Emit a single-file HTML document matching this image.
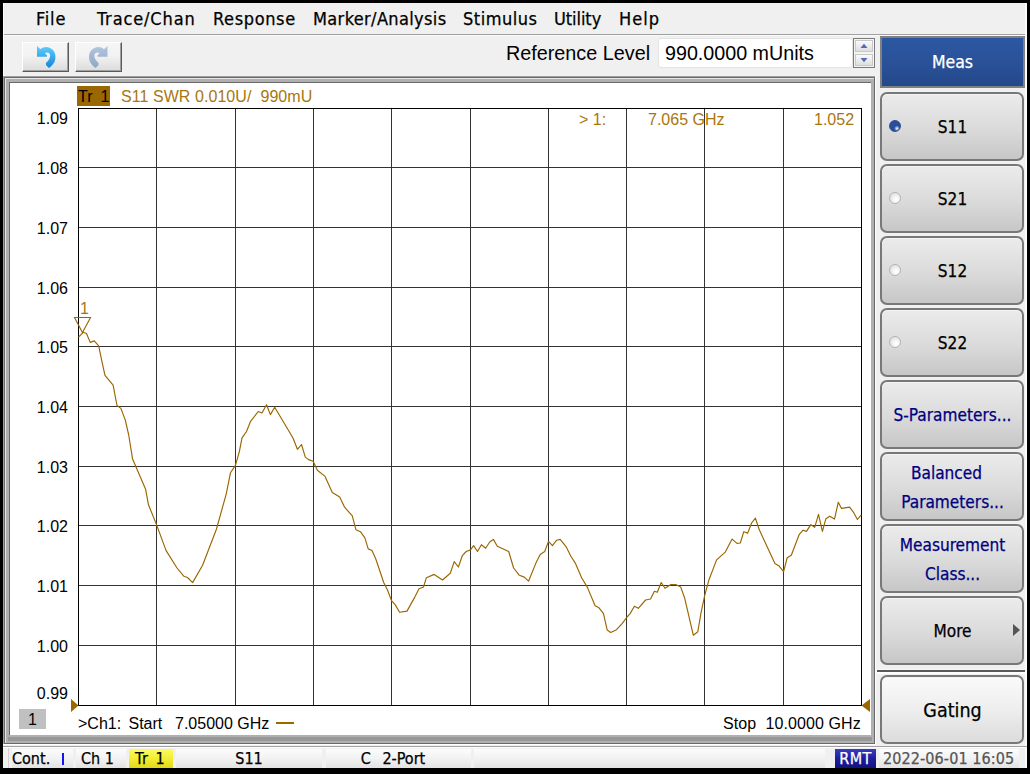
<!DOCTYPE html>
<html><head><meta charset="utf-8">
<title>Network Analyzer</title>
<style>
html,body{margin:0;padding:0;}
body{width:1030px;height:774px;background:#000;position:relative;overflow:hidden;font-family:"Liberation Sans",sans-serif;color:#000;}
div,span{box-sizing:border-box;}
.abs{position:absolute;}
.th{font-family:"DejaVu Sans Condensed","DejaVu Sans","Liberation Sans",sans-serif;font-stretch:condensed;-webkit-text-stroke:0.25px;}
#win{position:absolute;left:3px;top:3px;width:1024px;height:765px;background:#f0f0f0;}
.menu{position:absolute;top:8px;font-size:18px;line-height:21px;white-space:nowrap;letter-spacing:0.2px;}
.tbtn{position:absolute;top:42px;width:47px;height:30px;border:1px solid;border-color:#fff #5a5a5a #5a5a5a #fff;background:linear-gradient(#f6f6f6,#f2f2f2 45%,#dcdcdc);box-shadow:inset -1px -1px 0 #a0a0a0;}
.yl{position:absolute;left:20px;width:48px;text-align:right;font-size:16px;line-height:20px;}
.pt{position:absolute;font-size:16px;line-height:20px;white-space:nowrap;}
.gold{color:#a9760d;}
.sb{position:absolute;left:880px;width:144px;border:2px solid #787878;border-radius:7px;background:linear-gradient(#ebebeb,#dcdcdc 50%,#c7c7c7);box-shadow:inset 0 1px 0 #f4f4f4;}
.sb.gating{background:linear-gradient(#fafafa,#eeeeee 50%,#dcdcdc);}
.lbl1{-webkit-text-stroke:0.25px;font-stretch:condensed;position:absolute;left:-1px;width:143px;text-align:center;font-size:17.1px;line-height:22px;font-family:"DejaVu Sans Condensed","DejaVu Sans","Liberation Sans",sans-serif;white-space:nowrap;}
.lbl1.blue{color:#000080;}
.lbl1.big{font-size:19.5px;line-height:24px;}
.radio{position:absolute;left:7px;top:26px;width:12px;height:12px;border-radius:50%;background:radial-gradient(circle at 65% 65%,#fff 10%,#e8e8e8 60%,#dcdcdc 100%);border:1px solid #b4b4b4;}
.radio.on{background:radial-gradient(circle at 70% 75%,#fff 0,#2a4d97 28%);border-color:#2a4d97;}
.tri{position:absolute;left:130.5px;top:26px;width:0;height:0;border-left:7.5px solid #555;border-top:6.5px solid transparent;border-bottom:6.5px solid transparent;}
.sp{position:absolute;top:749px;height:19px;background:linear-gradient(#fcfcfc,#f2f2f2 50%,#e2e2e2);font-size:16px;line-height:20px;white-space:nowrap;}
</style></head><body>
<div id="win"></div>
<!-- menu bar -->
<div class="menu th" style="left:36px;letter-spacing:0.8px">File</div>
<div class="menu th" style="left:97px;letter-spacing:0.87px">Trace/Chan</div>
<div class="menu th" style="left:213px;letter-spacing:0.63px">Response</div>
<div class="menu th" style="left:313px;letter-spacing:0.36px">Marker/Analysis</div>
<div class="menu th" style="left:463px;letter-spacing:0.5px">Stimulus</div>
<div class="menu th" style="left:554px;letter-spacing:-0.07px">Utility</div>
<div class="menu th" style="left:619px;letter-spacing:1px">Help</div>
<div class="abs" style="left:3px;top:34px;width:1024px;height:1px;background:#a0a0a0"></div>
<div class="abs" style="left:3px;top:35px;width:1024px;height:1px;background:#fafafa"></div>
<!-- toolbar -->
<div class="tbtn" style="left:22px"></div>
<div class="tbtn" style="left:75px"></div>
<svg class="abs" style="left:0;top:0" width="140" height="80" viewBox="0 0 140 80">
<defs>
<linearGradient id="gu" x1="0" y1="0" x2="0" y2="1"><stop offset="0" stop-color="#62cdff"/><stop offset="1" stop-color="#1287d8"/></linearGradient>
<linearGradient id="gr" x1="0" y1="0" x2="0" y2="1"><stop offset="0" stop-color="#b4c6de"/><stop offset="1" stop-color="#8ea6c8"/></linearGradient>
</defs>
<path id="undo" fill="url(#gu)" d="M37 45.9 L37 56.7 L46.9 56.7 L47 55.2 L44.9 53.4 C46 52.4 48.3 52.2 49.4 53.6 C50.4 54.8 50.5 57 49 59.4 C48 61 46.8 62.2 45.9 63.1 L46.1 65.3 L49 68 C51 66.5 52.5 65 53.3 63.7 C54.5 62 55.2 60.5 55.4 58 C55.7 54.8 54.8 52.2 53.3 50.5 C51.5 48.3 48.6 47 46.3 47 C44 47 42 47.8 40.5 49.2 Z"/>
<path fill="url(#gr)" transform="translate(144.5 0) scale(-1 1)" d="M37 45.9 L37 56.7 L46.9 56.7 L47 55.2 L44.9 53.4 C46 52.4 48.3 52.2 49.4 53.6 C50.4 54.8 50.5 57 49 59.4 C48 61 46.8 62.2 45.9 63.1 L46.1 65.3 L49 68 C51 66.5 52.5 65 53.3 63.7 C54.5 62 55.2 60.5 55.4 58 C55.7 54.8 54.8 52.2 53.3 50.5 C51.5 48.3 48.6 47 46.3 47 C44 47 42 47.8 40.5 49.2 Z"/>
</svg>
<div class="abs" style="left:506px;top:41px;font-size:19.8px;line-height:24px;white-space:nowrap">Reference Level</div>
<div class="abs" style="left:658px;top:38px;width:195px;height:30px;background:#fff;border:1px solid #e3e3e3;border-radius:3px;"></div>
<div class="abs" style="left:665px;top:41px;font-size:19.7px;line-height:24px;white-space:nowrap">990.0000 mUnits</div>
<div class="abs" style="left:853px;top:38px;width:22px;height:30px;border:1px solid #7a7a7a;background:#f4f4f4;"></div>
<div class="abs" style="left:855px;top:40px;width:18px;height:12px;border:1px solid #c8c8c8;background:linear-gradient(#fafafa,#dedede);"></div>
<div class="abs" style="left:855px;top:54px;width:18px;height:12px;border:1px solid #c8c8c8;background:linear-gradient(#fafafa,#dedede);"></div>
<svg class="abs" style="left:853px;top:38px" width="22" height="30"><path d="M7.5 10 L14.5 10 L11 5.8 Z M7.5 20 L14.5 20 L11 24.2 Z" fill="#5468b8"/></svg>
<!-- plot frame -->
<div class="abs" style="left:3px;top:76px;width:873px;height:669px;background:#fff"></div>
<div class="abs" style="left:3px;top:76px;width:872px;height:668px;background:#a0a0a0"></div>
<div class="abs" style="left:4px;top:77px;width:871px;height:667px;background:#696969"></div>
<div class="abs" style="left:5px;top:78px;width:869px;height:665px;background:#e6e6e6"></div>
<div class="abs" style="left:6px;top:79px;width:868px;height:664px;background:#b0b0b0"></div>
<div class="abs" style="left:8px;top:737px;width:864px;height:4px;background:#989898"></div>
<div class="abs" style="left:9px;top:82px;width:862px;height:653px;background:#696969"></div>
<div class="abs" style="left:10px;top:83px;width:861px;height:652px;background:#fff"></div>
<!-- plot -->
<div class="abs" style="left:77px;top:86px;width:33px;height:20px;background:#9a6700"></div>
<div class="pt" style="left:78px;top:87px;word-spacing:-0.5px">Tr&nbsp; 1</div>
<div class="pt gold" style="left:121px;top:87px;letter-spacing:0.06px">S11 SWR 0.010U/&nbsp; 990mU</div>
<div class="yl" style="top:109px">1.09</div><div class="yl" style="top:159px">1.08</div><div class="yl" style="top:219px">1.07</div><div class="yl" style="top:279px">1.06</div><div class="yl" style="top:338px">1.05</div><div class="yl" style="top:398px">1.04</div><div class="yl" style="top:458px">1.03</div><div class="yl" style="top:517px">1.02</div><div class="yl" style="top:577px">1.01</div><div class="yl" style="top:637px">1.00</div><div class="yl" style="top:684px">0.99</div>
<svg class="abs" style="left:0;top:0" width="1030" height="774" viewBox="0 0 1030 774">
<g fill="#333" shape-rendering="crispEdges"><rect x="156" y="108" width="1" height="598"/><rect x="235" y="108" width="1" height="598"/><rect x="313" y="108" width="1" height="598"/><rect x="391" y="108" width="1" height="598"/><rect x="470" y="108" width="1" height="598"/><rect x="548" y="108" width="1" height="598"/><rect x="626" y="108" width="1" height="598"/><rect x="704" y="108" width="1" height="598"/><rect x="783" y="108" width="1" height="598"/><rect x="78" y="167" width="784" height="1"/><rect x="78" y="227" width="784" height="1"/><rect x="78" y="287" width="784" height="1"/><rect x="78" y="346" width="784" height="1"/><rect x="78" y="406" width="784" height="1"/><rect x="78" y="466" width="784" height="1"/><rect x="78" y="525" width="784" height="1"/><rect x="78" y="585" width="784" height="1"/><rect x="78" y="645" width="784" height="1"/></g><g fill="#000" shape-rendering="crispEdges"><rect x="78" y="108" width="784" height="1"/><rect x="78" y="705" width="784" height="1"/><rect x="78" y="108" width="1" height="598"/><rect x="861" y="108" width="1" height="598"/></g>
<polyline fill="none" stroke="#996600" stroke-width="1.15" stroke-linejoin="round" points="78.5,337.2 83.2,332.3 86.5,333.5 90.2,342.4 94.3,340.9 98.7,345.9 102.0,361.8 105.0,375.4 113.1,385.1 117.0,405.5 120.9,408.4 125.3,420.1 128.7,435.0 132.6,459.1 145.6,489.2 148.5,504.8 156.7,525.1 166.0,550.4 177.0,568.0 184.0,576.3 187.5,577.5 192.6,582.6 202.6,565.3 216.5,529.0 226.2,494.1 230.5,472.7 235.4,465.4 239.3,451.8 242.0,437.9 246.5,431.5 250.4,421.7 258.2,411.5 262.0,413.0 266.5,404.7 270.4,414.6 274.7,407.2 285.3,425.0 293.1,438.3 297.4,449.3 301.5,444.5 305.3,457.1 308.6,459.6 313.1,461.2 317.4,470.3 324.8,476.1 332.3,492.6 339.7,497.1 344.6,507.2 352.3,515.9 355.9,529.7 360.4,531.7 364.9,537.9 368.2,548.9 372.0,550.5 375.9,559.2 383.7,582.5 387.6,590.3 391.5,600.6 395.3,604.9 399.6,612.2 407.0,611.1 414.8,597.1 419.0,588.7 423.5,587.0 426.4,577.7 434.2,574.4 442.5,580.0 450.3,573.2 454.2,561.6 458.4,567.0 462.3,555.7 466.2,551.5 470.5,549.9 473.6,545.6 477.5,551.5 481.4,544.7 485.6,548.2 489.9,541.7 493.4,539.4 497.3,546.2 508.7,551.5 513.6,568.0 519.4,575.3 524.3,577.1 528.5,581.2 535.9,563.1 540.2,554.4 544.7,551.5 548.5,541.4 552.4,545.6 556.7,540.2 560.2,539.4 566.0,546.6 570.9,556.3 575.3,563.1 581.6,577.7 587.4,587.4 595.1,605.8 599.0,607.8 603.5,613.6 607.2,630.1 610.7,632.4 616.5,629.7 622.3,623.3 626.6,617.5 630.1,613.6 634.4,606.2 638.3,608.3 645.6,600.0 650.5,599.0 654.4,591.3 657.3,592.2 661.2,582.5 665.0,588.3 670.9,584.5 675.7,584.5 680.7,587.1 684.6,597.8 693.3,635.2 697.8,631.7 701.1,612.3 704.6,595.8 708.8,580.3 716.6,559.9 725.3,552.1 732.1,539.1 737.0,543.4 740.3,543.0 743.8,531.7 747.7,533.1 751.6,523.0 755.4,518.2 759.3,529.8 774.9,563.4 778.7,565.7 783.6,571.6 787.1,558.0 791.4,555.0 799.1,534.7 803.0,530.2 806.5,531.4 810.8,524.6 814.7,527.3 818.5,514.3 822.4,531.4 825.9,518.7 829.8,516.2 834.5,519.1 838.3,502.2 841.5,508.4 849.6,507.1 853.5,512.3 857.4,519.5 861.3,514.9"/>
<path d="M74.5 317.5 L90.5 317.5 L82.5 332.5 Z" fill="none" stroke="#996600" stroke-width="1.1"/>
<path d="M71 699 L78.5 705.5 L71 712 Z" fill="#9a6700"/>
<path d="M870 699 L861.5 705.5 L870 712 Z" fill="#9a6700"/>
<rect x="276" y="722" width="18" height="2" fill="#9a6700"/>
</svg>
<div class="pt gold" style="left:80px;top:299px;">1</div>
<div class="pt gold" style="left:579px;top:110px;">&gt; 1:</div>
<div class="pt gold" style="left:648px;top:110px;">7.065 GHz</div>
<div class="pt gold" style="left:814px;top:110px;">1.052</div>
<div class="abs" style="left:19px;top:709px;width:27px;height:20px;background:#c0c0c0;text-align:center;font-size:16px;line-height:22px">1</div>
<div class="pt" style="left:78px;top:714px;">&gt;Ch1:</div><div class="pt" style="left:128.5px;top:714px;">Start</div><div class="pt" style="left:175px;top:714px;">7.05000 GHz</div>
<div class="pt" style="left:723px;top:714px;letter-spacing:0.1px">Stop&nbsp; 10.0000 GHz</div>
<!-- side panel -->
<div class="abs th" style="left:880px;top:36px;width:145px;height:52px;border:2px solid #808080;background:linear-gradient(#2b57a2,#2a5299 50%,#23488a);color:#fff;font-size:17.5px;line-height:48px;text-align:center">Meas</div>
<div class="sb " style="top:92px;height:69px"><span class="radio on"></span><span class="lbl1" style="top:22px">S11</span></div><div class="sb " style="top:164px;height:69px"><span class="radio "></span><span class="lbl1" style="top:22px">S21</span></div><div class="sb " style="top:236px;height:69px"><span class="radio "></span><span class="lbl1" style="top:22px">S12</span></div><div class="sb " style="top:308px;height:69px"><span class="radio "></span><span class="lbl1" style="top:22px">S22</span></div><div class="sb " style="top:380px;height:69px"><span class="lbl1 blue" style="top:22px">S-Parameters...</span></div><div class="sb " style="top:452px;height:69px"><span class="lbl1 blue" style="top:8px;padding-right:12px">Balanced</span><span class="lbl1 blue" style="top:37px;">Parameters...</span></div><div class="sb " style="top:524px;height:69px"><span class="lbl1 blue" style="top:8px">Measurement</span><span class="lbl1 blue" style="top:37px">Class...</span></div><div class="sb " style="top:596px;height:69px"><span class="lbl1" style="top:22px">More</span><span class="tri"></span></div><div class="sb gating" style="top:675px;height:69px"><span class="lbl1 big" style="top:22px">Gating</span></div>
<div class="abs" style="left:877px;top:669px;width:150px;height:1px;background:#f8f8f8"></div>
<div class="abs" style="left:877px;top:670px;width:150px;height:2px;background:#585858"></div>
<div class="abs" style="left:877px;top:672px;width:150px;height:2px;background:#fcfcfc"></div>
<div class="abs" style="left:1025px;top:3px;width:2px;height:765px;background:#fcfcfc"></div>
<div class="abs" style="left:3px;top:3px;width:1px;height:73px;background:#fcfcfc"></div>
<!-- status bar -->
<div class="abs" style="left:3px;top:746px;width:1024px;height:1px;background:#a0a0a0"></div>
<div class="abs" style="left:3px;top:747px;width:1024px;height:1px;background:#ffffff"></div>
<div class="abs" style="left:8px;top:748px;width:1px;height:20px;background:#d4d0d0"></div>
<div class="sp th" style="left:12px;width:61px;">Cont.</div>
<div class="abs" style="left:62px;top:753px;width:2px;height:12px;background:#1414f0"></div>
<div class="sp th" style="left:76px;width:50px;padding-left:5px">Ch 1</div>
<div class="sp th" style="left:129px;width:44px;padding-left:6px;word-spacing:2px;letter-spacing:0.5px;background:linear-gradient(#fbfb62,#f1ec30 55%,#e0d81c)">Tr 1</div>
<div class="sp th" style="left:176px;width:146px;text-align:center">S11</div>
<div class="sp th" style="left:326px;width:145px;text-align:center;padding-right:11px;word-spacing:1.2px">C&nbsp; 2-Port</div>
<div class="sp th" style="left:474px;width:351px"></div>
<div class="sp th" style="left:835px;width:41px;background:linear-gradient(#3a3ac4,#1e1e9c 50%,#121280);color:#fff;text-align:center;letter-spacing:0.4px">RMT</div>
<div class="sp th" style="left:879px;width:140px;color:#555;padding-left:4px;letter-spacing:0.1px">2022-06-01 16:05</div>
</body></html>
